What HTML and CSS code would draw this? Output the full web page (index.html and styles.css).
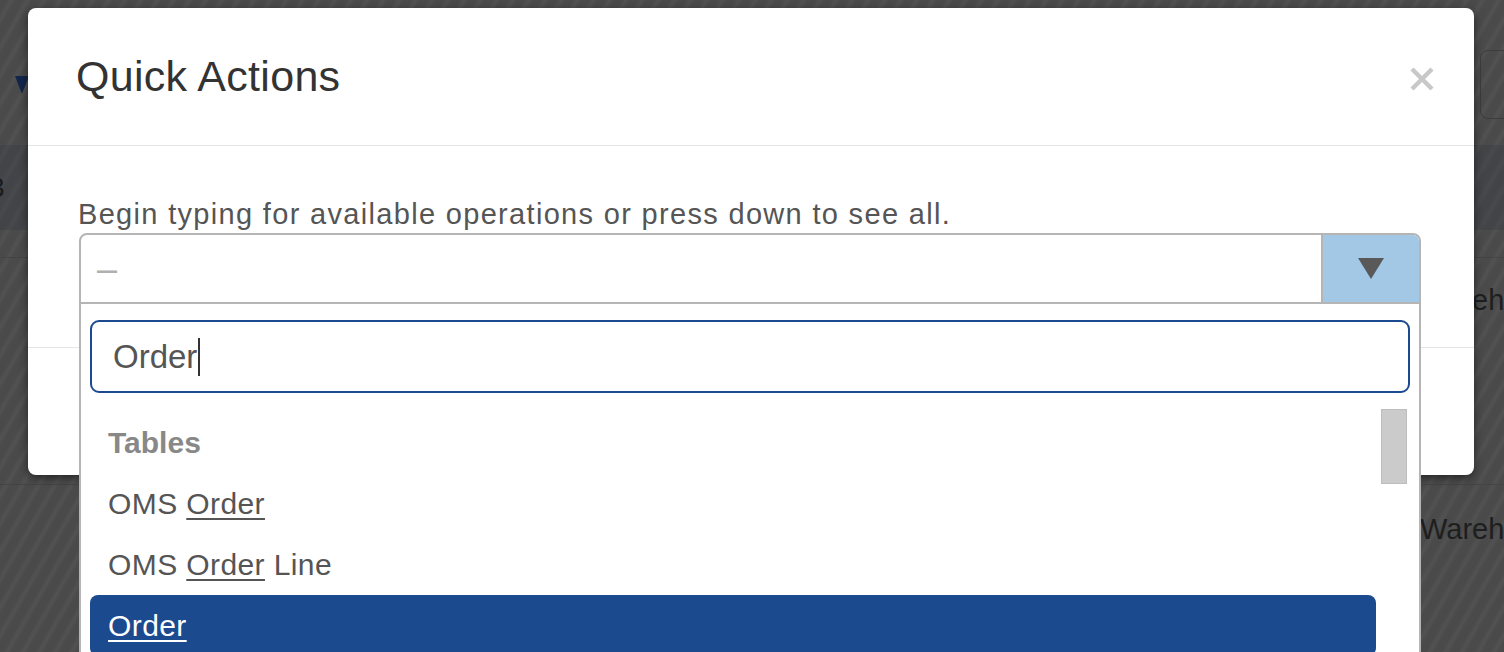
FILE: index.html
```html
<!DOCTYPE html>
<html lang="en">
<head>
<meta charset="utf-8">
<title>Quick Actions</title>
<link rel="stylesheet" href="styles.css">
</head>
<body>
<div class="page">
  <div class="bg-top">
    <span class="bg-caret"></span>
    <span class="bg-button"></span>
  </div>
  <div class="bg-band"><span class="bg-num">3</span></div>
  <div class="bg-gap"></div>
  <div class="bg-row bg-row-tall"><span class="bg-cell">Warehouse</span></div>
  <div class="bg-row bg-row-last"><span class="bg-cell">Warehouse</span></div>

  <div class="modal" role="dialog" aria-label="Quick Actions">
    <div class="modal-header">
      <h1 class="modal-title">Quick Actions</h1>
      <button class="modal-close" aria-label="Close">
        <svg width="24" height="24" viewBox="0 0 24 24"><path d="M2 2 L22 22 M22 2 L2 22" stroke="#c8c8c8" stroke-width="4.4" fill="none"/></svg>
      </button>
    </div>
    <div class="modal-body">
      <div class="label">Begin typing for available operations or press down to see all.</div>
      <div class="select">
        <div class="select-value">–</div>
        <div class="select-arrow">
          <svg width="26" height="21" viewBox="0 0 26 21"><path d="M0 0 H26 L13 21 Z" fill="#595959"/></svg>
        </div>
        <div class="dropdown">
          <div class="search"><span class="search-text">Order</span><span class="caret"></span></div>
          <div class="results">
            <ul class="result-list">
              <li class="group">Tables</li>
              <li class="option">OMS <u>Order</u></li>
              <li class="option">OMS <u>Order</u> Line</li>
              <li class="option active"><u>Order</u></li>
            </ul>
            <div class="scroll-track"><div class="scroll-thumb"></div></div>
          </div>
        </div>
      </div>
    </div>
    <div class="modal-footer"></div>
  </div>
</div>
</body>
</html>
```

FILE: styles.css
```css
* { box-sizing: border-box; }

html, body {
  margin: 0;
  padding: 0;
}

body {
  width: 1504px;
  height: 652px;
  overflow: hidden;
  font-family: "Liberation Sans", Arial, sans-serif;
}

.page {
  position: relative;
  width: 1504px;
  height: 652px;
  overflow: hidden;
  background: repeating-linear-gradient(120deg, #4a4a4a 0px, #4a4a4a 6px, #525252 10px, #4a4a4a 14px);
}

/* dimmed page behind the dialog */
.bg-top {
  height: 145px;
  display: flex;
  justify-content: space-between;
  align-items: flex-start;
}

.bg-caret {
  margin: 76px 0 0 15px;
  width: 0;
  height: 0;
  border-left: 7px solid transparent;
  border-right: 7px solid transparent;
  border-top: 18px solid #13264a;
}

.bg-button {
  margin: 50px -40px 0 0;
  width: 64px;
  height: 69px;
  border: 1px solid #3c3c3c;
  border-radius: 8px;
}

.bg-band {
  height: 85px;
  display: flex;
  align-items: center;
  background: rgba(45, 55, 70, 0.28);
}

.bg-num {
  margin-left: -11px;
  font-size: 28px;
  color: #1c1c1c;
}

.bg-gap {
  height: 28px;
  border-bottom: 1px solid #444;
}

.bg-row {
  height: 88px;
  display: flex;
  align-items: center;
  border-bottom: 1px solid #444;
}

.bg-row-tall {
  height: 227px;
  align-items: flex-start;
  padding-top: 26px;
}

.bg-row-last {
  border-bottom: 0;
}

.bg-cell {
  margin-left: 1420px;
  font-size: 29px;
  color: #1e1e1e;
  white-space: nowrap;
}

/* dialog */
.modal {
  position: absolute;
  left: 28px;
  top: 8px;
  width: 1446px;
  height: 467px;
  background: #fff;
  border-radius: 8px;
  box-shadow: 0 3px 9px rgba(0, 0, 0, 0.5);
  display: flex;
  flex-direction: column;
}

.modal-header {
  height: 138px;
  flex: none;
  border-bottom: 1px solid #e5e5e5;
  display: flex;
  align-items: center;
  justify-content: space-between;
  padding: 0 40px 0 48px;
}

.modal-title {
  margin: 0;
  font-size: 43px;
  font-weight: normal;
  letter-spacing: 0.3px;
  color: #333;
  line-height: 1;
}

.modal-close {
  border: 0;
  background: none;
  padding: 0;
  margin-top: 4px;
  width: 24px;
  height: 24px;
  display: flex;
}

.modal-body {
  flex: none;
  padding: 53px 53px 43px 51px;
  border-bottom: 1px solid #e5e5e5;
}

.label {
  font-size: 29px;
  line-height: 31px;
  letter-spacing: 1.32px;
  color: #555;
  margin-bottom: 3px;
  margin-left: -1px;
  white-space: nowrap;
}

.select {
  position: relative;
  height: 71px;
  border: 2px solid #b5b5b5;
  border-radius: 8px 8px 0 0;
  display: flex;
}

.select-value {
  flex: 1;
  display: flex;
  align-items: center;
  padding-left: 16px;
  font-size: 36px;
  color: #b0b0b0;
}

.select-arrow {
  width: 98px;
  border-left: 2px solid #b5b5b5;
  background: #a3c8e6;
  border-top-right-radius: 6px;
  display: flex;
  align-items: center;
  justify-content: center;
}

.dropdown {
  position: absolute;
  z-index: 2;
  top: 100%;
  left: -2px;
  right: -2px;
  height: 380px;
  margin-top: 2px;
  background: #fff;
  border: 2px solid #b5b5b5;
  border-top: 0;
  padding: 16px 9px 0 9px;
}

.search {
  height: 73px;
  border: 2px solid #1b4a90;
  border-radius: 9px;
  display: flex;
  align-items: center;
  padding-left: 21px;
  font-size: 33px;
  color: #555;
}

.caret {
  width: 2px;
  height: 38px;
  background: #333;
  margin-left: 1px;
}

.results {
  display: flex;
  margin-top: 16px;
}

.result-list {
  flex: 1;
  list-style: none;
  margin: 0;
  padding: 3px 0 0;
}

.result-list li {
  height: 61px;
  display: flex;
  align-items: center;
  padding-left: 18px;
  font-size: 30px;
  letter-spacing: 0.4px;
  color: #555;
  white-space: pre;
}

.result-list u {
  text-decoration-thickness: 2px;
  text-underline-offset: 4px;
}

.result-list .group {
  font-weight: bold;
  color: #888;
  letter-spacing: 0;
}

.result-list .active {
  background: #1b4a8f;
  color: #fff;
  border-radius: 8px;
}

.scroll-track {
  width: 34px;
  flex: none;
  padding-left: 5px;
}

.scroll-thumb {
  width: 26px;
  height: 75px;
  background: #cbcbcb;
  border: 1px solid #bdbdbd;
}

.modal-footer {
  flex: 1;
}
```
